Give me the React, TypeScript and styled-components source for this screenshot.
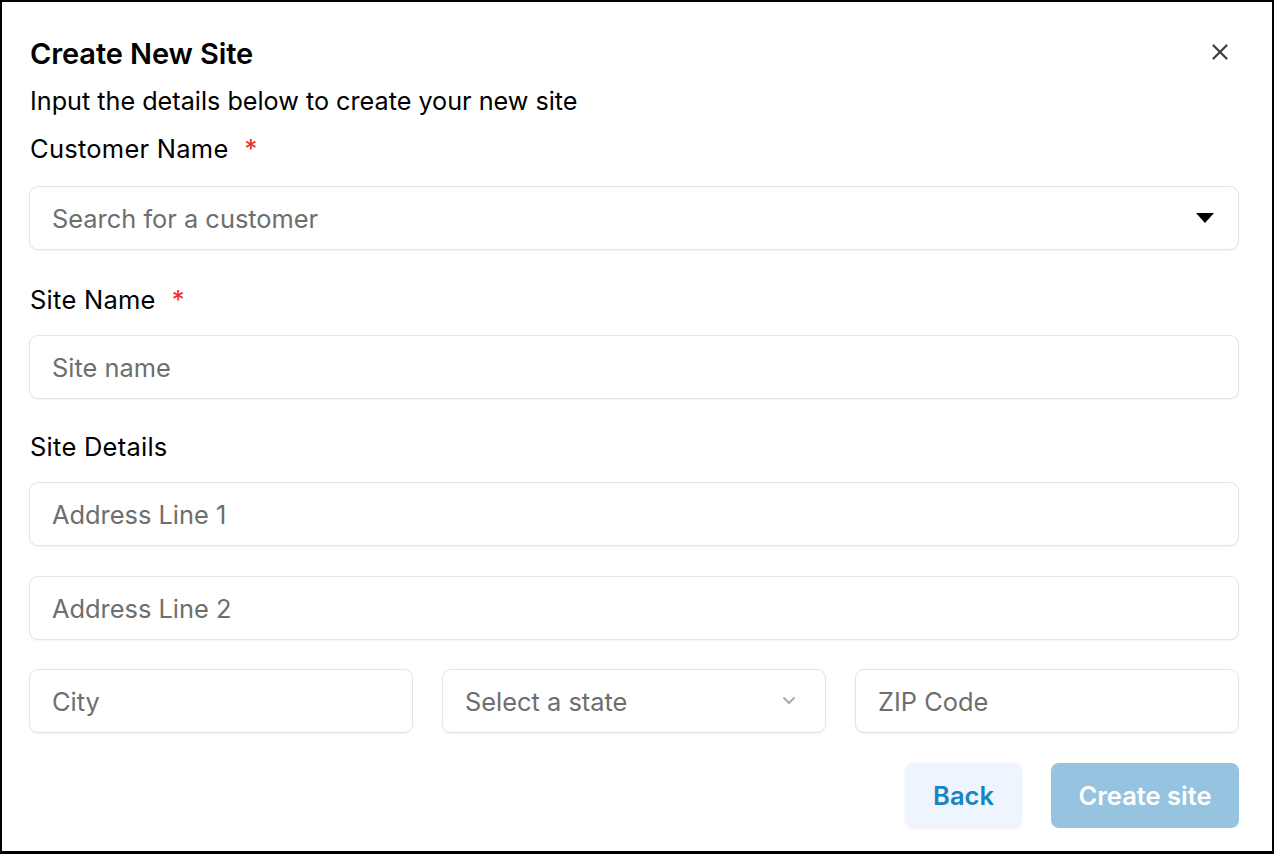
import React from "react";
import styled, { createGlobalStyle } from "styled-components";

const GlobalStyle = createGlobalStyle`
  html, body {
    margin: 0;
    padding: 0;
    background: #fff;
  }
  body {
    font-family: Inter, "Noto Sans", sans-serif;
    color: #000;
  }
`;

const Dialog = styled.div`
  box-sizing: border-box;
  width: 1274px;
  height: 854px;
  border: 2px solid #000;
  border-bottom-width: 3px;
  background: #fff;
  padding: 35px 33px 0 27px;
`;

const Header = styled.div`
  display: flex;
  justify-content: space-between;
  align-items: flex-start;
`;

const Title = styled.h2`
  margin: 0 0 0 1px;
  font-size: 29px;
  font-weight: 600;
  line-height: 34px;
  letter-spacing: -0.1px;
`;

const CloseBtn = styled.button`
  border: none;
  background: none;
  padding: 0;
  margin: 7px 11px 0 0;
  width: 16px;
  height: 16px;
  color: #3c3c3c;
  cursor: pointer;
  svg {
    display: block;
  }
`;

const Subtitle = styled.p`
  margin: 15px 0 0 1px;
  font-size: 25.2px;
  line-height: 30px;
`;

const Label = styled.div<{ $top?: number }>`
  margin-top: ${(p) => p.$top ?? 19}px;
  margin-left: 1px;
  font-size: 25.5px;
  letter-spacing: 0.25px;
  line-height: 30px;
  display: flex;
  gap: 16px;
`;

const Required = styled.span`
  color: #ef2b2b;
`;

const Field = styled.div<{ $top?: number }>`
  box-sizing: border-box;
  margin-top: ${(p) => p.$top ?? 20}px;
  height: 64px;
  border: 1.5px solid #e3e4e7;
  border-radius: 9px;
  box-shadow: 0 1px 2px rgba(0, 0, 0, 0.05);
  background: #fff;
  display: flex;
  align-items: center;
  justify-content: space-between;
  padding: 0 22px;
  font-size: 25.4px;
  color: #6e6e6e;
`;

const Row = styled.div`
  display: grid;
  grid-template-columns: repeat(3, 1fr);
  gap: 29px;
  margin-top: 29px;
  > div {
    margin-top: 0;
  }
`;

const Footer = styled.div`
  display: flex;
  justify-content: flex-end;
  gap: 29px;
  margin-top: 30px;
`;

const Button = styled.button<{ $primary?: boolean }>`
  height: 65px;
  border: none;
  border-radius: 8px;
  padding: 0;
  white-space: nowrap;
  font-family: Inter, "Noto Sans", sans-serif;
  font-size: 25.5px;
  font-weight: 600;
  background: ${(p) => (p.$primary ? "#95c3e0" : "#eef5fe")};
  color: ${(p) => (p.$primary ? "#fff" : "#1785c3")};
  box-shadow: ${(p) => (p.$primary ? "none" : "0 1px 3px rgba(0,0,0,0.06)")};
  width: ${(p) => (p.$primary ? "188px" : "117px")};
`;

const Caret = styled.svg<{ $right?: number }>`
  margin-right: ${(p) => p.$right ?? 0}px;
  flex-shrink: 0;
`;

export default function App() {
  return (
    <>
      <GlobalStyle />
      <Dialog>
        <Header>
          <Title>Create New Site</Title>
          <CloseBtn aria-label="close">
            <svg width="16" height="16" viewBox="0 0 16 16" fill="none" stroke="currentColor" strokeWidth="2.2" strokeLinecap="round">
              <path d="M1.5 1.5 L14.5 14.5 M14.5 1.5 L1.5 14.5" />
            </svg>
          </CloseBtn>
        </Header>
        <Subtitle>Input the details below to create your new site</Subtitle>
        <Label $top={18}>
          Customer Name <Required>*</Required>
        </Label>
        <Field $top={22}>
          Search for a customer
          <Caret $right={2} width="18" height="10" viewBox="0 0 18 10">
            <path d="M0 0 H18 L9 10 Z" fill="#000" />
          </Caret>
        </Field>
        <Label $top={35}>
          Site Name <Required>*</Required>
        </Label>
        <Field>Site name</Field>
        <Label $top={33}>Site Details</Label>
        <Field>Address Line 1</Field>
        <Field $top={30}>Address Line 2</Field>
        <Row>
          <Field>City</Field>
          <Field>
            Select a state
            <Caret $right={6} width="16" height="10" viewBox="0 0 16 10" fill="none" stroke="#aaa" strokeWidth="2" strokeLinecap="round" strokeLinejoin="round">
              <path d="M3 2 L8 7 L13 2" />
            </Caret>
          </Field>
          <Field>ZIP Code</Field>
        </Row>
        <Footer>
          <Button>Back</Button>
          <Button $primary>Create site</Button>
        </Footer>
      </Dialog>
    </>
  );
}
